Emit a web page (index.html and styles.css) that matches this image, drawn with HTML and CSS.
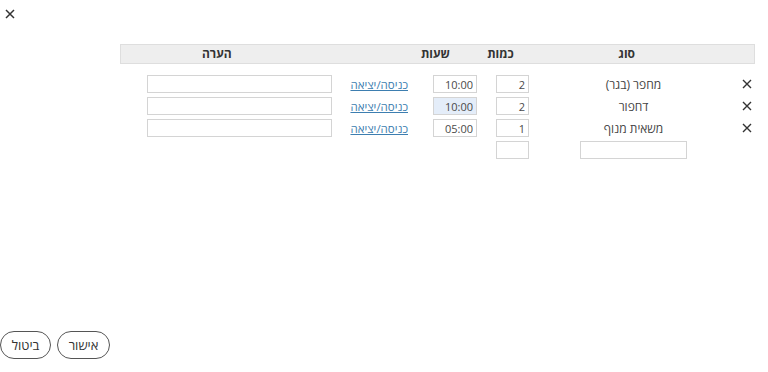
FILE: index.html
```html
<!DOCTYPE html>
<html lang="he" dir="rtl">
<head>
<meta charset="utf-8">
<title>Dialog</title>
<link rel="stylesheet" href="styles.css">
</head>
<body>
<div class="dialog">
  <div class="topbar">
    <button class="close" aria-label="סגור">
      <svg width="10" height="10" viewBox="0 0 10 10"><path d="M1 1L9 9M9 1L1 9" stroke="#333" stroke-width="1.5" fill="none"/></svg>
    </button>
  </div>

  <div class="table">
    <div class="thead">
      <div class="h h-x"></div>
      <div class="h h-type">סוג</div>
      <div class="h h-qty">כמות</div>
      <div class="h h-hours">שעות</div>
      <div class="h h-spacer"></div>
      <div class="h h-note">הערה</div>
    </div>

    <div class="row">
      <div class="c-x"><svg width="10" height="10" viewBox="0 0 10 10"><path d="M1 1L9 9M9 1L1 9" stroke="#333" stroke-width="1.4" fill="none"/></svg></div>
      <div class="c-type">מחפר (בגר)</div>
      <div class="c-qty"><input class="inp qty" value="2"></div>
      <div class="c-hours"><input class="inp hours" value="10:00"></div>
      <div class="c-link"><a href="#">כניסה/יציאה</a></div>
      <div class="c-note"><input class="inp note" value=""></div>
    </div>
    <div class="row">
      <div class="c-x"><svg width="10" height="10" viewBox="0 0 10 10"><path d="M1 1L9 9M9 1L1 9" stroke="#333" stroke-width="1.4" fill="none"/></svg></div>
      <div class="c-type">דחפור</div>
      <div class="c-qty"><input class="inp qty" value="2"></div>
      <div class="c-hours"><input class="inp hours focus" value="10:00"></div>
      <div class="c-link"><a href="#">כניסה/יציאה</a></div>
      <div class="c-note"><input class="inp note" value=""></div>
    </div>
    <div class="row">
      <div class="c-x"><svg width="10" height="10" viewBox="0 0 10 10"><path d="M1 1L9 9M9 1L1 9" stroke="#333" stroke-width="1.4" fill="none"/></svg></div>
      <div class="c-type">משאית מנוף</div>
      <div class="c-qty"><input class="inp qty" value="1"></div>
      <div class="c-hours"><input class="inp hours" value="05:00"></div>
      <div class="c-link"><a href="#">כניסה/יציאה</a></div>
      <div class="c-note"><input class="inp note" value=""></div>
    </div>
    <div class="row">
      <div class="c-x"></div>
      <div class="c-type"><input class="inp type" value=""></div>
      <div class="c-qty"><input class="inp qty" value=""></div>
    </div>
  </div>

  <div class="footer">
    <button class="btn btn-ok">אישור</button>
    <button class="btn btn-cancel">ביטול</button>
  </div>
</div>
</body>
</html>
```

FILE: styles.css
```css
* { box-sizing: border-box; }
html, body { margin: 0; padding: 0; }
body {
  font-family: "Open Sans", "Liberation Sans", "DejaVu Sans", sans-serif;
  color: #333;
  background: #fff;
  font-size: 12px;
}
.dialog {
  height: 372px;
  display: flex;
  flex-direction: column;
}
.topbar {
  height: 44px;
  display: flex;
  justify-content: flex-end;
  align-items: flex-start;
  padding: 9px 0 0 5px;
}
.close {
  border: 0;
  background: none;
  padding: 0;
  width: 10px;
  height: 10px;
  display: flex;
  cursor: pointer;
}
.table {
  margin-right: 13px;
  margin-left: 120px;
}
.thead {
  display: flex;
  height: 20px;
  background: #eeeeee;
  border: 1px solid #dedede;
  font-weight: 700;
  font-size: 12px;
  color: #333;
  align-items: center;
  margin-bottom: 9px;
}
.h { text-align: center; line-height: 18px; }
.h-x { width: 17px; }
.h-type { width: 221px; }
.h-qty { width: 32px; }
.h-hours { width: 98px; }
.h-spacer { width: 74px; }
.h-note { width: 192px; }

.row {
  display: flex;
  align-items: center;
  height: 22px;
}
.c-x {
  width: 17px;
  display: flex;
  justify-content: center;
  padding-left: 1px;
}
.c-type {
  width: 209px;
  text-align: center;
  color: #444;
  font-size: 12px;
  display: flex;
  justify-content: center;
}
.c-qty { width: 52px; }
.c-hours { width: 44px; }
.c-link {
  width: 101px;
  padding-right: 25px;
  font-size: 11.5px;
}
.c-link a { color: #3d7eb0; text-decoration: underline; }
.c-note { width: 185px; }

.inp {
  display: block;
  height: 18px;
  border: 1px solid #d4d4d4;
  background: #fff;
  font-family: inherit;
  font-size: 11px;
  color: #4a4a4a;
  padding: 0 3px;
  margin: 0;
  outline: none;
  text-align: right;
}
.qty { width: 33px; }
.hours { width: 44px; }
.hours.focus { background: #e4edf9; }
.note { width: 185px; }
.type { width: 107px; }

.footer {
  margin-top: auto;
  display: flex;
  justify-content: flex-end;
  gap: 6px;
  padding: 0 2px 13px 0;
}
.btn {
  height: 28px;
  padding: 0 6px;
  border: 1px solid #555;
  border-radius: 14px;
  background: #fff;
  font-family: inherit;
  font-size: 13px;
  color: #333;
}
.btn-ok { width: 53px; }
.btn-cancel { width: 51px; }
```
